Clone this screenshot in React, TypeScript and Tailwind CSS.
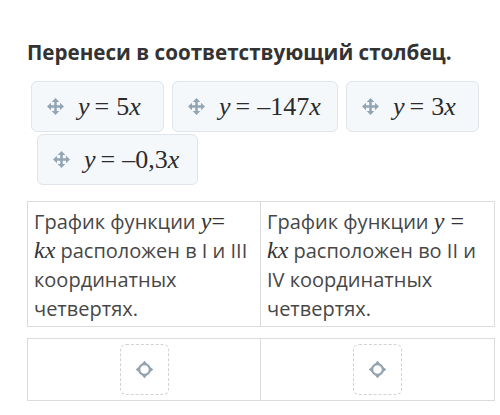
const MoveIcon = () => (
  <svg width="17" height="17" viewBox="0 0 16 16" className="shrink-0 text-[#93a5b3]">
    <path d="M8 3v10M3 8h10" stroke="currentColor" strokeWidth="2.4" />
    <path d="M8 0l3.6 3.8h-7.2zM8 16l3.6-3.8h-7.2zM0 8l3.8-3.6v7.2zM16 8l-3.8-3.6v7.2z" fill="currentColor" />
  </svg>
)

const TargetIcon = () => (
  <svg width="19" height="19" viewBox="0 0 17 17" className="text-[#92a2af]">
    <circle cx="8.5" cy="8.5" r="4.8" fill="none" stroke="currentColor" strokeWidth="2" />
    <path d="M8.5 0.6l2.3 2.8h-4.6zM8.5 16.4l2.3-2.8h-4.6zM0.6 8.5l2.8-2.3v4.6zM16.4 8.5l-2.8-2.3v4.6z" fill="currentColor" />
  </svg>
)

const serif = "font-['Liberation_Serif',serif]"

const I = ({ children }: { children: React.ReactNode }) => (
  <span className="italic">{children}</span>
)

const Eq = () => <span className="ml-[5px] mr-[7px]">=</span>

const Chip = ({ children, className = '' }: { children: React.ReactNode; className?: string }) => (
  <div
    className={`flex h-[51px] items-center gap-[14px] rounded-md border border-[#dfe5ea] bg-[#f5f8fb] pl-[15px] pr-4 ${className}`}
  >
    <MoveIcon />
    <span className={`${serif} whitespace-nowrap text-[26px] leading-none text-[#2b2b2b]`}>{children}</span>
  </div>
)

const DropZone = () => (
  <div className="flex justify-center py-[5px]">
    <div className="flex h-[51px] w-[49px] items-center justify-center rounded-md border border-dashed border-[#cfd3d6]">
      <TargetIcon />
    </div>
  </div>
)

const Math = ({ children }: { children: React.ReactNode }) => (
  <span className={`${serif} text-[24px] leading-none text-[#333]`}>{children}</span>
)

export default function App() {
  return (
    <div className="h-[415px] w-[500px] bg-white pl-[27px] pr-[5px] pt-[38px] font-['Open_Sans',sans-serif]">
      <h1 className="text-[20.6px] font-bold leading-[28px] text-[#333]">Перенеси в соответствующий столбец.</h1>

      <div className="mt-[15px] flex gap-2 pl-1">
        <Chip className="w-[133px]">
          <I>y</I>
          <Eq />5<I>x</I>
        </Chip>
        <Chip className="w-[166px]">
          <I>y</I>
          <Eq />–147<I>x</I>
        </Chip>
        <Chip className="w-[133px]">
          <I>y</I>
          <Eq />3<I>x</I>
        </Chip>
      </div>
      <div className="mt-[2px] flex pl-[10px]">
        <Chip className="w-[161px]">
          <I>y</I>
          <Eq />–0,3<I>x</I>
        </Chip>
      </div>

      <div className="mt-4 grid grid-cols-[233px_1fr] border border-[#dcdcdc] text-[20px] leading-[29px] text-[#474747]">
        <div className="border-r border-[#dcdcdc] pb-[3px] pl-[6px] pr-1 pt-[5px]">
          <span>График функции </span>
          <Math>
            <I>y</I>=
          </Math>
          <br />
          <Math>
            <I>kx</I>
          </Math>
          <span> расположен в I и III </span>
          <span>координатных четвертях.</span>
        </div>
        <div className="pb-[3px] pl-[6px] pr-1 pt-[5px]">
          <span>График функции </span>
          <Math>
            <I>y</I> =
          </Math>
          <br />
          <Math>
            <I>kx</I>
          </Math>
          <span> расположен во II и </span>
          <span>IV координатных четвертях.</span>
        </div>
      </div>

      <div className="mt-[11px] grid grid-cols-[233px_1fr] border border-[#dcdcdc]">
        <div className="border-r border-[#dcdcdc]">
          <DropZone />
        </div>
        <div>
          <DropZone />
        </div>
      </div>
    </div>
  )
}
